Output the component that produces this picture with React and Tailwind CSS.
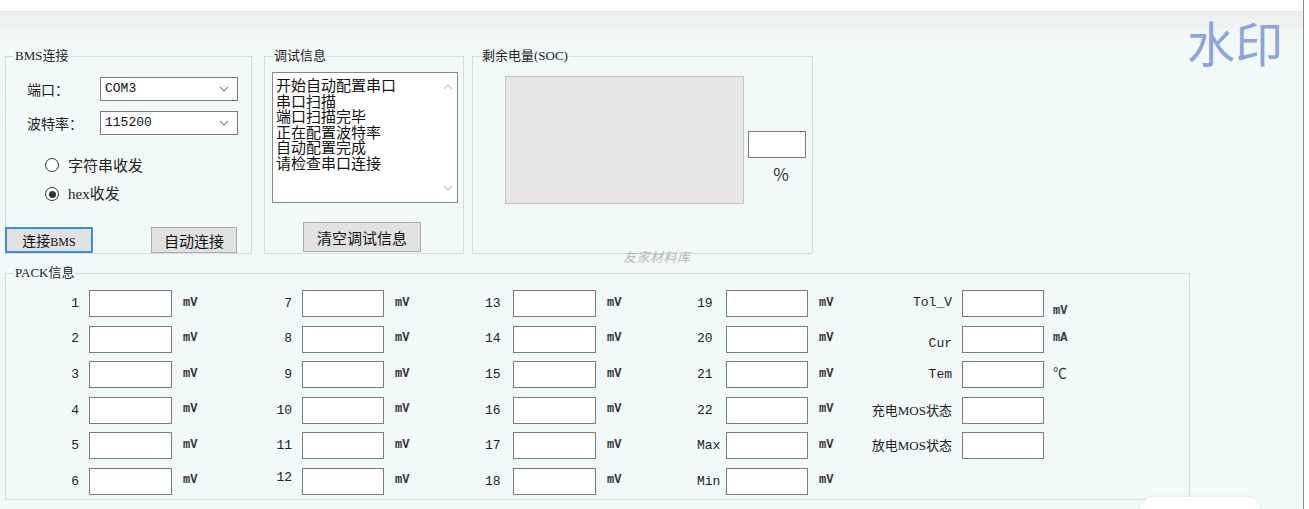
import React from 'react';

const cjk = "font-['Noto_Sans_CJK_SC',sans-serif]";
const mono = "font-['Liberation_Mono','Noto_Sans_CJK_SC',monospace]";
const serif = "font-['Liberation_Serif','Noto_Sans_CJK_SC',serif]";

function Chevron({ up = false, className = '' }) {
  return (
    <svg width="10" height="6" viewBox="0 0 10 6" className={className}>
      <path
        d={up ? 'M1 5 L5 1 L9 5' : 'M1 1 L5 5 L9 1'}
        fill="none"
        stroke="currentColor"
        strokeWidth="1.1"
      />
    </svg>
  );
}

function Combo({ value }) {
  return (
    <div className="flex items-center justify-between w-[138px] h-[24px] border border-[#7a7a7a] bg-white pl-[4px] pr-[8px]">
      <span className={`${mono} text-[13px] text-[#111]`}>{value}</span>
      <Chevron className="text-[#8a8a8a]" />
    </div>
  );
}

function Radio({ checked, children }) {
  return (
    <div className="flex items-center h-[22px] pl-[39px]">
      <span className="flex items-center justify-center w-[14px] h-[14px] rounded-full border border-[#333] bg-white">
        {checked && <span className="w-[7px] h-[7px] rounded-full bg-[#333]" />}
      </span>
      <span className="ml-[9px] text-[15px] text-[#222]">{children}</span>
    </div>
  );
}

function Group({ title, className = '', children }) {
  return (
    <fieldset className={`border border-[#d6dddd] ${className}`}>
      <legend className={`ml-[8px] px-[1px] text-[13px] leading-[14px] text-[#222] ${serif}`}>{title}</legend>
      {children}
    </fieldset>
  );
}

const logLines = [
  '开始自动配置串口',
  '串口扫描',
  '端口扫描完毕',
  '正在配置波特率',
  '自动配置完成',
  '请检查串口连接',
];

// pack columns: label text, label alignment, units
const packCols = [
  { labels: ['1', '2', '3', '4', '5', '6'], labelCls: 'justify-end pr-[10px]' },
  { labels: ['7', '8', '9', '10', '11', '12'], labelCls: 'justify-end pr-[10px]' },
  { labels: ['13', '14', '15', '16', '17', '18'], labelCls: 'pl-[25px]' },
  { labels: ['19', '20', '21', '22', 'Max', 'Min'], labelCls: 'pl-[27px]' },
  {
    labels: ['Tol_V', 'Cur', 'Tem', '充电MOS状态', '放电MOS状态'],
    labelCls: 'justify-end pr-[10px]',
    units: ['mV', 'mA', '℃', '', ''],
  },
];

function PackGrid() {
  const cells = [];
  for (let r = 0; r < 6; r++) {
    packCols.forEach((col, c) => {
      const label = col.labels[r];
      if (label === undefined) {
        cells.push(<div key={`${r}-${c}-a`} />, <div key={`${r}-${c}-b`} />, <div key={`${r}-${c}-c`} />);
        return;
      }
      const unit = col.units ? col.units[r] : 'mV';
      const isCjk = /[\u4e00-\u9fff]/.test(label);
      let labelShift = '';
      if (c === 4 && r === 0) labelShift = 'mb-[2px]';
      if (c === 4 && r === 1) labelShift = 'mt-[10px]';
      if (c === 1 && r === 5) labelShift = 'mb-[8px]';
      let unitShift = 'mb-[2px]';
      if (c === 4 && r === 0) unitShift = 'mt-[14px]';
      if (c === 4 && r === 2) unitShift = 'mb-[4px]';
      cells.push(
        <div key={`${r}-${c}-l`} className={`flex items-center ${col.labelCls}`}>
          <span
            className={`${labelShift} ${isCjk ? `${serif} text-[13px]` : `${mono} text-[13px]`} text-[#222] whitespace-nowrap`}
          >
            {label}
          </span>
        </div>,
        <div key={`${r}-${c}-i`} className="border border-[#7b7b7b] bg-white" />,
        <div key={`${r}-${c}-u`} className={`flex items-center ${c === 4 ? 'pl-[9px]' : 'pl-[11px]'}`}>
          <span
            className={`${unitShift} ${unit === '℃' ? `${cjk} text-[14px]` : `${mono} text-[12px] font-bold`} text-[#333]`}
          >
            {unit}
          </span>
        </div>
      );
    });
  }
  return (
    <div className="grid grid-cols-[83px_83px_58px_72px_82px_76px_53px_83px_74px_56px_82px_42px_112px_82px_1fr] auto-rows-[27px] gap-y-[8.6px] pt-[9px] pb-[4px]">
      {cells}
    </div>
  );
}

export default function App() {
  return (
    <div className={`relative w-[1309px] h-[509px] overflow-hidden bg-[#f2f9f9] ${cjk}`}>
      <div className="flex h-full">
        <div className="flex flex-col w-[1303px]">
          <div className="h-[12px] bg-white border-b border-[#e6e6e6]" />
          <div className="h-[28px] bg-gradient-to-b from-[#ededed] to-[#f2f8f8]" />

          <div className="flex pl-[5px] pt-[9px]">
            <Group title="BMS连接" className="w-[247px] pb-0">
              <div className="pt-[14px]">
                <div className="flex items-center">
                  <span className="w-[94px] pl-[21px] text-[14px] text-[#222]">端口：</span>
                  <Combo value="COM3" />
                </div>
                <div className="flex items-center mt-[10px]">
                  <span className="w-[94px] pl-[21px] text-[14px] text-[#222]">波特率：</span>
                  <Combo value="115200" />
                </div>
                <div className="mt-[19px]">
                  <Radio>字符串收发</Radio>
                </div>
                <div className="mt-[7px]">
                  <Radio checked>
                    <span className={`${serif} text-[15px]`}>hex</span>收发
                  </Radio>
                </div>
                <div className="flex items-end justify-between mt-[22px] -ml-[1px] pr-[14px]">
                  <button className="w-[88px] h-[26px] bg-[#e1e1e1] border-2 border-[#3f8fd6] text-[14px] text-[#111] leading-none">
                    连接<span className={`${serif} text-[12px]`}>BMS</span>
                  </button>
                  <button className="w-[86px] h-[26px] bg-[#e1e1e1] border border-[#adadad] text-[15px] text-[#111] leading-none">
                    自动连接
                  </button>
                </div>
              </div>
            </Group>

            <Group title="调试信息" className="w-[200px] ml-[12px]">
              <div className="pt-[9px] pl-[7px]">
                <div className="relative flex w-[186px] h-[131px] border border-[#888] bg-white">
                  <div className="flex-1 pl-[3px] pt-[4px] text-[15px] leading-[15.5px] text-[#111]">
                    {logLines.map((line) => (
                      <div key={line}>{line}</div>
                    ))}
                  </div>
                  <div className="flex flex-col items-center justify-between w-[19px] py-[11px] text-[#c4c4c4]">
                    <Chevron up />
                    <Chevron />
                  </div>
                </div>
                <button className="w-[118px] h-[30px] mt-[19px] ml-[31px] bg-[#e1e1e1] border border-[#adadad] text-[15px] text-[#111] leading-none">
                  清空调试信息
                </button>
              </div>
            </Group>

            <Group title="剩余电量(SOC)" className="w-[341px] ml-[8px]">
              <div className="flex pt-[13px] pl-[32px]">
                <div className="w-[239px] h-[128px] bg-[#e6e6e6] border border-[#c6c6c6]" />
                <div className="flex flex-col items-center ml-[4px] pt-[55px]">
                  <div className="w-[58px] h-[27px] border border-[#7b7b7b] bg-white" />
                  <span className="mt-[6px] ml-[8px] text-[17px] text-[#333] leading-[20px]">%</span>
                </div>
              </div>
            </Group>
          </div>

          <div className="pl-[5px] mt-[11px]">
            <fieldset className="w-[1185px] border border-[#d6dddd]">
              <legend className={`ml-[8px] px-[1px] text-[13px] leading-[16px] text-[#222] ${serif}`}>PACK信息</legend>
              <PackGrid />
            </fieldset>
          </div>
        </div>
        <div className="w-[1px] bg-[#8c8c8c]" />
        <div className="flex-1 bg-white" />
      </div>

      <span className="absolute left-[623px] top-[247px] text-[13px] italic text-[#b8b8b8] tracking-[0.5px]">
        友家材料库
      </span>
      <span className="absolute left-[1187px] top-[17px] text-[48px] leading-none text-[#8ea5d7]">水印</span>
      <div className="absolute left-[1140px] top-[497px] w-[120px] h-[30px] rounded-[14px] bg-white shadow-[0_0_4px_rgba(0,0,0,0.08)]" />
    </div>
  );
}
